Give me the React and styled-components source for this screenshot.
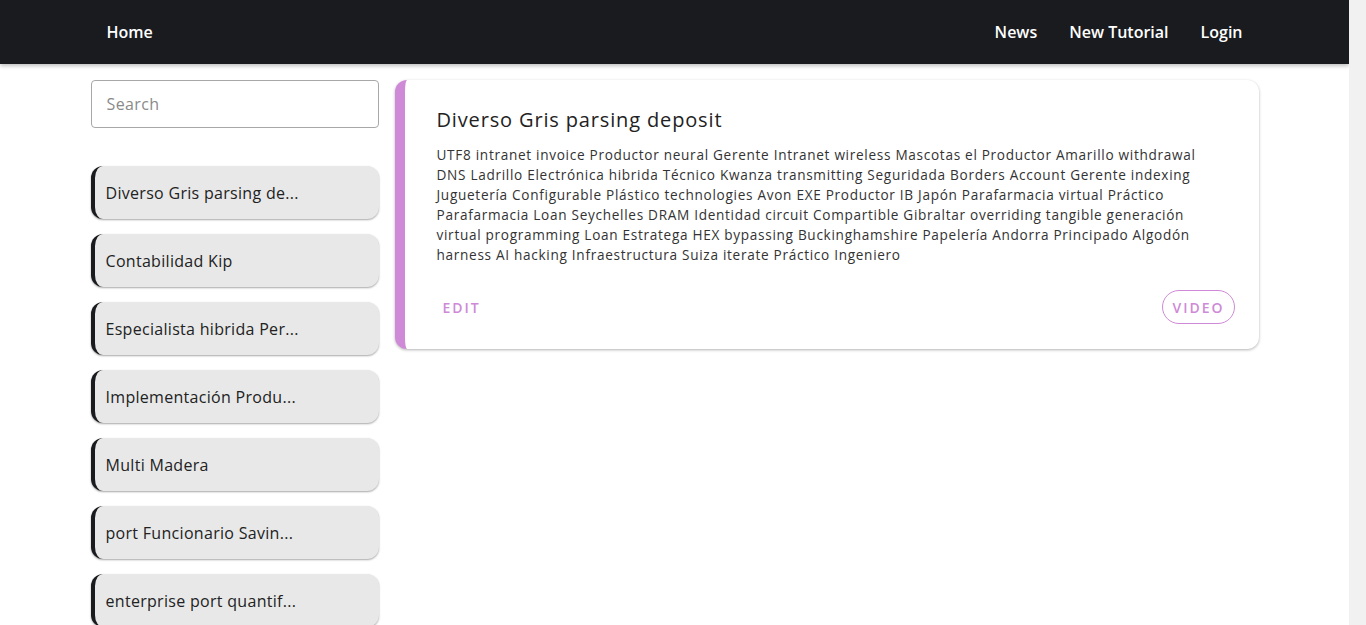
import React, { useState } from "react";
import styled, { createGlobalStyle } from "styled-components";

const GlobalStyle = createGlobalStyle`
  html { background: #f1f1f1; }
  body {
    margin: 0 17px 0 0;
    min-height: 100vh;
    background: #fff;
    font-family: "Open Sans", "Noto Sans", sans-serif;
    color: #222;
  }
  * { box-sizing: border-box; }
`;

const tutorials = [
  {
    title: "Diverso Gris parsing deposit",
    short: "Diverso Gris parsing de...",
    description:
      "UTF8 intranet invoice Productor neural Gerente Intranet wireless Mascotas el Productor Amarillo withdrawal DNS Ladrillo Electrónica hibrida Técnico Kwanza transmitting Seguridada Borders Account Gerente indexing Juguetería Configurable Plástico technologies Avon EXE Productor IB Japón Parafarmacia virtual Práctico Parafarmacia Loan Seychelles DRAM Identidad circuit Compartible Gibraltar overriding tangible generación virtual programming Loan Estratega HEX bypassing Buckinghamshire Papelería Andorra Principado Algodón harness AI hacking Infraestructura Suiza iterate Práctico Ingeniero",
  },
  { title: "Contabilidad Kip", short: "Contabilidad Kip" },
  { title: "Especialista hibrida Perú", short: "Especialista hibrida Per..." },
  { title: "Implementación Productor", short: "Implementación Produ..." },
  { title: "Multi Madera", short: "Multi Madera" },
  { title: "port Funcionario Savings", short: "port Funcionario Savin..." },
  { title: "enterprise port quantify", short: "enterprise port quantif..." },
  { title: "Sistemático Metal", short: "Sistemático Metal" },
  { title: "Cliente Rupia bandwidth", short: "Cliente Rupia bandwid..." },
];

const Nav = styled.header`
  background: #1a1b1f;
  height: 64px;
  box-shadow: 0 2px 4px rgba(0, 0, 0, 0.25);
`;

const NavInner = styled.nav`
  max-width: 1168px;
  height: 100%;
  margin: 0 auto;
  padding: 0 16px;
  display: flex;
  align-items: center;
  gap: 32px;
`;

const NavLink = styled.a`
  color: #fff;
  font-size: 16px;
  font-weight: 600;
  text-decoration: none;
  margin-left: ${(p) => (p.$push ? "auto" : "0")};
`;

const Main = styled.main`
  max-width: 1168px;
  margin: 16px auto 0;
  display: grid;
  grid-template-columns: 288px 1fr;
  gap: 16px;
  align-items: start;
`;

const Sidebar = styled.aside`
  display: flex;
  flex-direction: column;
`;

const SearchInput = styled.input`
  height: 48px;
  width: 100%;
  border: 1px solid #a8a8a8;
  border-radius: 4px;
  padding: 0 15px;
  font-family: inherit;
  font-size: 16px;
  letter-spacing: 0.4px;
  color: #222;
  outline: none;
  &::placeholder { color: #8a8a8a; }
`;

const List = styled.ul`
  list-style: none;
  margin: 38px 0 0;
  padding: 0;
  display: flex;
  flex-direction: column;
  gap: 15px;
`;

const Item = styled.li`
  height: 53px;
  display: flex;
  align-items: center;
  padding: 0 11px;
  background: #e8e8e8;
  border-left: 4px solid #1a1b1f;
  border-radius: 12px;
  box-shadow: 0 1px 2px rgba(0, 0, 0, 0.35);
  font-size: 16px;
  letter-spacing: 0.3px;
  color: #222;
  white-space: nowrap;
  cursor: pointer;
`;

const Card = styled.article`
  background: #fff;
  border-left: 10px solid #ce8ad6;
  border-radius: 12px;
  box-shadow: 0 1px 3px rgba(0, 0, 0, 0.3);
  padding: 26px 24px 25px 32px;
`;

const Title = styled.h2`
  margin: 0 0 12px;
  font-size: 20px;
  font-weight: 500;
  letter-spacing: 0.85px;
  color: #222;
`;

const Body = styled.p`
  margin: 0 6px 0 0;
  font-size: 13.6px;
  line-height: 20px;
  letter-spacing: 0.7px;
  color: #333;
`;

const Actions = styled.div`
  display: flex;
  justify-content: space-between;
  align-items: center;
  margin-top: 25px;
`;

const Action = styled.button`
  background: none;
  font-family: inherit;
  font-size: 14px;
  font-weight: 600;
  letter-spacing: 2px;
  color: #ce8ad6;
  height: 34px;
  padding: 0 ${(p) => (p.$outlined ? "9px" : "5px")};
  border: 1px solid ${(p) => (p.$outlined ? "#ce8ad6" : "transparent")};
  border-radius: 17px;
  cursor: pointer;
`;

export default function App() {
  const [query, setQuery] = useState("");
  const current = tutorials[0];
  return (
    <>
      <GlobalStyle />
      <Nav>
        <NavInner>
          <NavLink href="#">Home</NavLink>
          <NavLink href="#" $push>News</NavLink>
          <NavLink href="#">New Tutorial</NavLink>
          <NavLink href="#">Login</NavLink>
        </NavInner>
      </Nav>
      <Main>
        <Sidebar>
          <SearchInput
            placeholder="Search"
            value={query}
            onChange={(e) => setQuery(e.target.value)}
          />
          <List>
            {tutorials.map((t) => (
              <Item key={t.title}>{t.short}</Item>
            ))}
          </List>
        </Sidebar>
        <Card>
          <Title>{current.title}</Title>
          <Body>{current.description}</Body>
          <Actions>
            <Action>EDIT</Action>
            <Action $outlined>VIDEO</Action>
          </Actions>
        </Card>
      </Main>
    </>
  );
}
